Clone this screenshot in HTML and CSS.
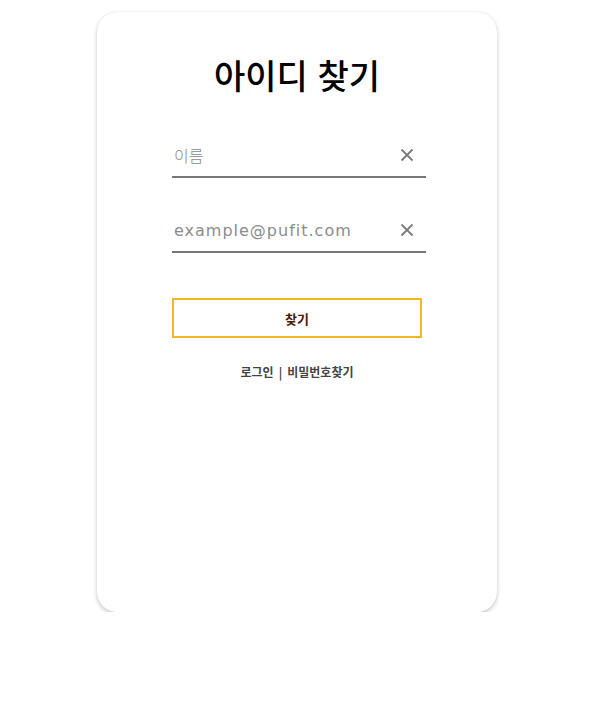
FILE: index.html
```html
<!DOCTYPE html>
<html lang="ko">
<head>
<meta charset="utf-8">
<link rel="stylesheet" href="styles.css">
</head>
<body>
<div class="page">
  <div class="card">
    <h1 class="title">아이디 찾기</h1>
    <div class="field">
      <span class="placeholder">이름</span>
      <svg class="clear" width="14" height="14" viewBox="0 0 14 14"><path d="M1.5 1.5L12.5 12.5M12.5 1.5L1.5 12.5" stroke="#7a7a7a" stroke-width="1.8" fill="none"/></svg>
    </div>
    <div class="field second">
      <span class="placeholder email">example@pufit.com</span>
      <svg class="clear" width="14" height="14" viewBox="0 0 14 14"><path d="M1.5 1.5L12.5 12.5M12.5 1.5L1.5 12.5" stroke="#7a7a7a" stroke-width="1.8" fill="none"/></svg>
    </div>
    <button class="btn">찾기</button>
    <div class="links"><span>로그인</span><span class="sep">|</span><span>비밀번호찾기</span></div>
  </div>
</div>
</body>
</html>
```
FILE: styles.css
```css
html, body { margin: 0; padding: 0; background: #fff; }
body { font-family: "Noto Sans CJK KR", "Noto Sans", sans-serif; }
.page { padding: 12px 0 0 97px; }
.card {
  width: 400px;
  height: 600px;
  box-sizing: border-box;
  border-radius: 20px;
  background: #fff;
  box-shadow: 0 2px 4px rgba(0,0,0,0.22), 0 0 1px rgba(0,0,0,0.12);
  padding: 0 75px;
  display: flex;
  flex-direction: column;
}
.title {
  margin: 42px 0 0;
  font-size: 34px;
  line-height: 42px;
  font-weight: 500;
  text-align: center;
  color: #000;
}
.field {
  margin-top: 38px;
  width: 254px;
  height: 44px;
  box-sizing: border-box;
  border-bottom: 2px solid #777;
  display: flex;
  align-items: center;
  justify-content: space-between;
  padding: 0 12px 0 2px;
}
.field.second { margin-top: 31px; }
.placeholder {
  font-size: 16px;
  color: #888;
  font-weight: 300;
}
.email {
  font-family: "DejaVu Sans", sans-serif;
  font-weight: 400;
  letter-spacing: 1px;
  font-size: 16px;
  color: #8c8c8c;
}
.clear { display: block; }
.btn {
  margin-top: 45px;
  width: 250px;
  height: 40px;
  border: 2px solid #f3b724;
  background: #fff;
  color: #4a1a04;
  font-family: "Noto Sans CJK KR", sans-serif;
  font-size: 13px;
  font-weight: 700;
  padding: 0;
}
.links {
  margin-top: 25px;
  width: 250px;
  text-align: center;
  font-size: 12px;
  font-weight: 700;
  color: #444;
  display: flex;
  justify-content: center;
  gap: 5px;
}
```
